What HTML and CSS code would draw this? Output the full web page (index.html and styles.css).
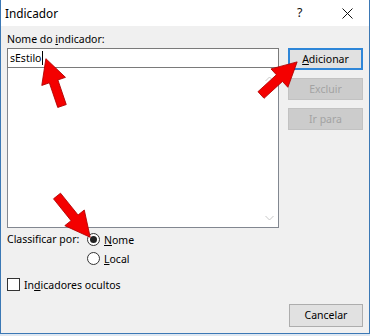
FILE: index.html
```html
<!DOCTYPE html>
<html lang="pt">
<head>
<meta charset="utf-8">
<title>Indicador</title>
<link rel="stylesheet" href="styles.css">
</head>
<body>
<div class="window">
  <div class="titlebar">
    <span class="title">Indicador</span>
    <span class="tb-help">?</span>
    <span class="tb-close">
      <svg width="11" height="11" viewBox="0 0 11 11"><path d="M0.5 0.5 L10.5 10.5 M10.5 0.5 L0.5 10.5" stroke="#111" stroke-width="1" fill="none"/></svg>
    </span>
  </div>
  <div class="content">
    <div class="label">Nome do <u>i</u>ndicador:</div>
    <div class="main">
      <div class="leftcol">
        <div class="input">sEstilo<span class="caret"></span></div>
        <div class="list">
          <div class="items"></div>
          <div class="scroll">
            <svg width="9" height="6" viewBox="0 0 9 6"><path d="M0.5 5 L4.5 1 L8.5 5" stroke="#c8c8c8" stroke-width="1" fill="none"/></svg>
            <svg width="9" height="6" viewBox="0 0 9 6"><path d="M0.5 1 L4.5 5 L8.5 1" stroke="#c8c8c8" stroke-width="1" fill="none"/></svg>
          </div>
        </div>
      </div>
      <div class="rightcol">
        <div class="btn default"><u>A</u>dicionar</div>
        <div class="btn disabled">Excluir</div>
        <div class="btn disabled">Ir para</div>
      </div>
    </div>
    <div class="sort">
      <div class="sort-label">Classificar por:</div>
      <div class="radios">
        <div class="opt"><span class="radio on"></span><span><u>N</u>ome</span></div>
        <div class="opt"><span class="radio"></span><span><u>L</u>ocal</span></div>
      </div>
    </div>
    <div class="check-row"><span class="checkbox"></span><span>In<u>d</u>icadores ocultos</span></div>
    <div class="footer"><div class="btn">Cancelar</div></div>
  </div>
  <svg class="arrows" width="370" height="336" viewBox="0 0 370 336">
    <g fill="#f40000" stroke="#b00000" stroke-width="0.8" stroke-linejoin="miter">
      <polygon transform="translate(62 106) rotate(-108.8)" points="0,-4.5 26,-4.5 26,-12.5 50,0 26,12.5 26,4.5 0,4.5"/>
      <polygon transform="translate(261 95) rotate(-42.5)" points="0,-4.5 25,-4.5 25,-12.5 49,0 25,12.5 25,4.5 0,4.5"/>
      <polygon transform="translate(57 196) rotate(51.2)" points="0,-4.5 28,-4.5 28,-12.5 53,0 28,12.5 28,4.5 0,4.5"/>
    </g>
  </svg>
</div>
</body>
</html>
```

FILE: styles.css
```css
* { box-sizing: border-box; }
html, body { margin: 0; padding: 0; }
body {
  width: 370px;
  height: 336px;
  background: #dfe8f2;
  font-family: "Noto Sans", "Open Sans", sans-serif;
  font-size: 10.5px;
  color: #000;
  overflow: hidden;
}
u { text-decoration: underline; text-underline-offset: 1px; }
.window {
  position: relative;
  width: 370px;
  height: 334px;
  border: 1px solid #3b78b5;
  border-top: none;
  background: #f0f0f0;
  display: flex;
  flex-direction: column;
}
.titlebar {
  height: 26px;
  background: #fff;
  display: flex;
  align-items: center;
  padding-left: 4px;
}
.title {
  font-size: 11.8px;
  flex: 1;
  padding-bottom: 1px;
}
.tb-help {
  font-size: 12.5px;
  width: 14px;
  margin-right: 31px;
  color: #111;
  padding-bottom: 1px;
}
.tb-close {
  width: 11px;
  height: 11px;
  margin-right: 16px;
  display: flex;
}
.content {
  flex: 1;
  padding: 6px 6px 0 6px;
  display: flex;
  flex-direction: column;
}
.label {
  height: 15px;
  line-height: 15px;
  padding-left: 0;
}
.main {
  display: flex;
  margin-top: 1px;
}
.leftcol {
  width: 272px;
  display: flex;
  flex-direction: column;
}
.input {
  height: 20px;
  border: 1px solid #7a7a7a;
  background: #fff;
  padding-left: 2px;
  line-height: 18px;
  display: flex;
  align-items: center;
}
.caret {
  display: inline-block;
  width: 1px;
  height: 14px;
  background: #000;
  margin-left: 1px;
}
.list {
  height: 160px;
  border: 1px solid #828790;
  border-top: none;
  background: #fff;
  display: flex;
}
.items { flex: 1; }
.scroll {
  width: 17px;
  display: flex;
  flex-direction: column;
  justify-content: space-between;
  align-items: center;
  padding: 8px 0 6px 0;
}
.rightcol {
  margin-left: 9px;
  display: flex;
  flex-direction: column;
  gap: 8px;
}
.btn {
  width: 75px;
  height: 22px;
  background: #e1e1e1;
  border: 1px solid #adadad;
  display: flex;
  align-items: center;
  justify-content: center;
  padding-bottom: 1px;
}
.btn.default {
  border: 2px solid #2e86d8;
}
.btn.disabled {
  background: #cccccc;
  border-color: #c2c2c2;
  color: #a3a3a3;
}
.sort {
  display: flex;
  margin-top: 2px;
}
.sort-label {
  width: 80px;
  height: 19px;
  line-height: 19px;
}
.radios {
  display: flex;
  flex-direction: column;
}
.opt {
  height: 19px;
  display: flex;
  align-items: center;
  gap: 4px;
}
.radio {
  width: 13px;
  height: 13px;
  border-radius: 50%;
  border: 1px solid #333;
  background: #fff;
  display: flex;
  align-items: center;
  justify-content: center;
}
.radio.on::after {
  content: "";
  width: 7px;
  height: 7px;
  border-radius: 50%;
  background: #222;
}
.check-row {
  margin-top: 7px;
  height: 19px;
  display: flex;
  align-items: center;
  gap: 4px;
}
.checkbox {
  width: 13px;
  height: 13px;
  border: 1px solid #333;
  background: #fff;
}
.footer {
  margin-top: 10px;
  display: flex;
  justify-content: flex-end;
  padding-right: 0;
  width: 356px;
}
.footer .btn { width: 74px; height: 23px; }
.arrows {
  position: absolute;
  left: -1px;
  top: 0;
  pointer-events: none;
}
```
